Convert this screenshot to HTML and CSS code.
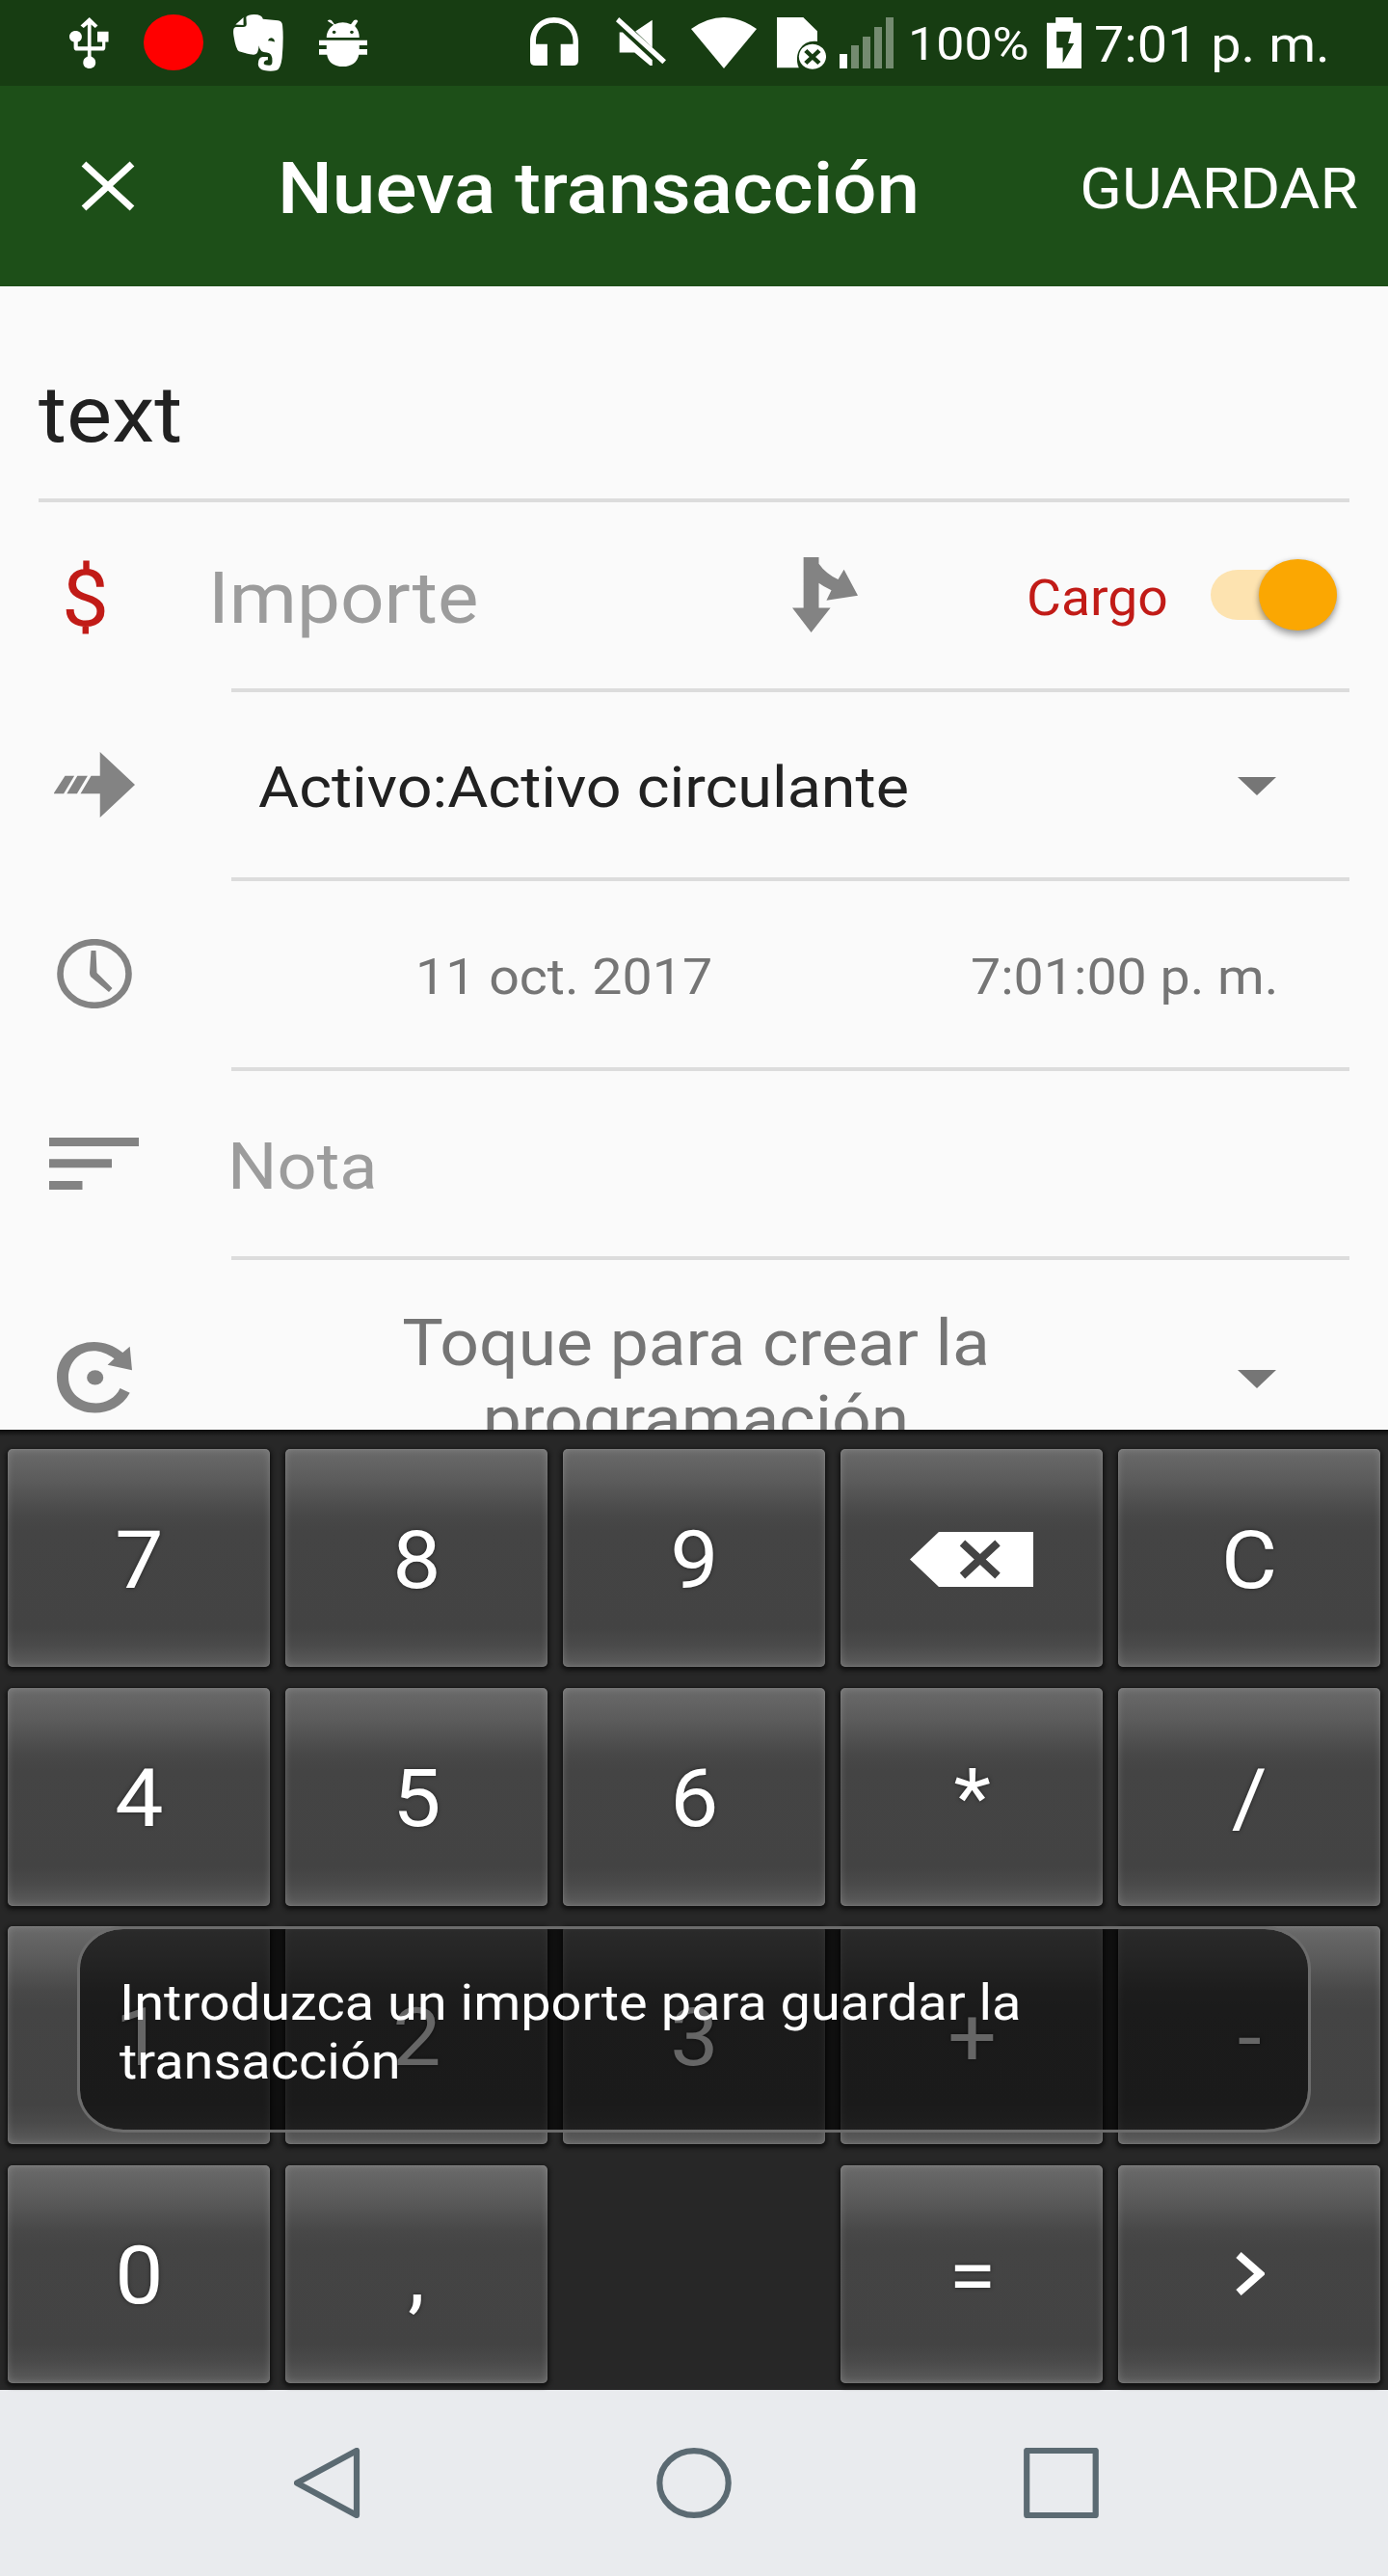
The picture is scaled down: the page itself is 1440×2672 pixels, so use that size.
FILE: index.html
```html
<!DOCTYPE html>
<html lang="es">
<head>
<meta charset="utf-8">
<title>Nueva transacción</title>
<link rel="stylesheet" href="styles.css">
</head>
<body>
<div class="screen">
  <header class="status">
    <svg class="ic usb" viewBox="157 55 89 158" preserveAspectRatio="none"><path d="M202 55L221 80L215 88L206 77V145H231V131H220V99H245V131H238V148Q238 158 231 158H206V176Q216 182 216 195C216 206 210 213 202 213C194 213 188 206 188 195Q188 182 198 176V158H174Q167 158 167 148V131Q157 126 157 115C157 105 163 97 171 97C179 97 185 105 185 115Q185 126 176 131V145H198V77L189 88L182 80Z"/></svg>
    <span class="record"></span>
    <svg class="ic evernote" viewBox="527 46 113 176" preserveAspectRatio="none"><path d="M532 77L550 55V79Z"/><path fill-rule="evenodd" d="M556 54Q560 46 574 46Q592 46 594 60L628 65Q637 66 638 80Q641 120 637 180Q634 215 624 219Q612 223 597 219Q584 215 583 200Q583 178 594 177H605V187Q595 188 596 199Q598 204 610 203Q615 203 615 190Q615 165 603 164Q586 163 585 142Q583 168 577 169Q572 174 540 160Q533 155 528 112Q525 86 533 85H549Q557 85 557 76ZM605 127Q608 116 615 119Q621 122 620 131Q612 127 605 127Z"/></svg>
    <svg class="ic droid" viewBox="721 60 109 147" preserveAspectRatio="none"><path fill-rule="evenodd" d="M738 117C738 100 744 86 754 77L740 65Q744 59 749 63L756 76Q775 63 793 76L800 63Q806 59 809 66L802 81Q812 96 812 117ZM755 95a4 5 0 1 0 .1 0ZM795 95a4 5 0 1 0 .1 0Z"/><path d="M721 125H830V141H812V153H830V170H811C808 194 794 207 775 207S741 194 739 170H721V153H738V141H721Z"/></svg>
    <svg class="ic phones" viewBox="1198 55 109 149" preserveAspectRatio="none"><path d="M1198 130C1198 88 1220 55 1252 55S1307 88 1307 130V188Q1307 204 1295 204H1267V138H1295V128C1295 95 1277 72 1252 72S1211 95 1211 128V138H1237V204H1210Q1198 204 1198 188Z"/></svg>
    <svg class="ic mute" viewBox="1392 55 113 149" preserveAspectRatio="none"><path d="M1399 55L1505 187L1497 199L1392 68ZM1474 63V148L1436 98ZM1400 101H1407L1474 187V204H1469L1434 164H1400Z"/></svg>
    <svg class="ic wifi" viewBox="0 0 68 53"><path d="M0 12Q34 -12 68 12L34 53Z"/></svg>
    <svg class="ic sim" viewBox="187 55 112 162" preserveAspectRatio="none"><path d="M187 55H247L279 98V130C250 122 223 160 237 212H187Z"/><path fill-rule="evenodd" d="M268 138a31 39 0 1 0 .1 0ZM256 154L268 170L280 154L287 163L275 178L287 193L280 202L268 187L256 202L249 193L261 178L249 163Z"/></svg>
    <span class="signal"><i class="b1"></i><i class="b2"></i><i class="b3"></i><i class="b4"></i><i class="b5"></i></span>
    <span class="pct t">100%</span>
    <svg class="ic batt" viewBox="797 55 78 157" preserveAspectRatio="none"><path fill-rule="evenodd" d="M797 72H817V55H856V72H875V212H797ZM819 99H852L845 135H858L833 195V148H819Z"/></svg>
    <span class="time t">7:01 p. m.</span>
  </header>

  <div class="appbar">
    <svg class="close" viewBox="0 0 56 52"><path d="M3 3L53 49M53 3L3 49"/></svg>
    <h1 class="title t">Nueva transacción</h1>
    <button class="save"><span class="t">GUARDAR</span></button>
  </div>

  <main class="form">
    <div class="desc"><span class="t">text</span></div>

    <div class="row">
      <div class="lead"><span class="currency t">$</span></div>
      <div class="body amount">
        <span class="importe hint t">Importe</span>
        <svg class="split" viewBox="223 234 146 233" preserveAspectRatio="none"><path d="M248 234H282V254Q297 284 325 303L338 272L369 353L299 368L310 336Q292 325 282 314V391H308L265 467L223 391H248Z"/></svg>
        <span class="cargo t">Cargo</span>
        <span class="toggle"><i class="knob"></i></span>
      </div>
    </div>

    <div class="row">
      <div class="lead"><svg class="transfer" viewBox="122 1253 183 178" preserveAspectRatio="none"><path d="M226 1253L305 1342L226 1431V1366H182L206 1318H226ZM147 1318H168L144 1366H121ZM175 1318H198L174 1366H151Z"/></svg></div>
      <div class="body account"><span class="t">Activo:Activo circulante</span><i class="caret"></i></div>
    </div>

    <div class="row">
      <div class="lead"><svg class="clock" viewBox="0 0 78 72"><ellipse cx="39" cy="36" rx="35.5" ry="32.8"/><path d="M35.5 12H40.5L41.5 35L57.5 51L54 55L35 39Q34 37 34 35Z"/></svg></div>
      <div class="body when"><span class="t">11 oct. 2017</span><span class="t">7:01:00 p. m.</span></div>
    </div>

    <div class="row">
      <div class="lead"><svg class="lines" viewBox="0 0 93 54"><path d="M0 0H93V9H0ZM0 22.300H65V31.300H0ZM0 45H34.500V54H0Z"/></svg></div>
      <div class="body note"><span class="hint t">Nota</span></div>
    </div>

    <div class="row repeat">
      <div class="lead"><svg class="recur" viewBox="129 1284 169 194" preserveAspectRatio="none"><path d="M293 1299L298 1362L243 1348L258 1331C205 1284 155 1324 155 1381C155 1458 246 1476 271 1411L293 1423C254 1510 129 1488 129 1381C129 1290 221 1258 277 1315Z"/><ellipse cx="215" cy="1382" rx="18.500" ry="20"/></svg></div>
      <div class="body"><div class="schedule"><span class="tc">Toque para crear la</span><span class="tc">programación</span></div><i class="caret"></i></div>
    </div>
  </main>

  <section class="pad">
    <div class="key"><span>7</span></div><div class="key"><span>8</span></div><div class="key"><span>9</span></div>
    <div class="key"><svg class="bksp" viewBox="0 0 128 57"><path fill-rule="evenodd" d="M0 28.500L30 0H128V57H30ZM52.500 14L67.500 28.500L52.500 43L57 47.500L73 33.500L88.500 47.500L93 43L78 28.500L93 14L88.500 9.500L73 23.500L57 9.500Z"/><path class="cross" d="M54.500 11.500L91 45.500M91 11.500L54.500 45.500"/></svg></div>
    <div class="key"><span>C</span></div>
    <div class="key"><span>4</span></div><div class="key"><span>5</span></div><div class="key"><span>6</span></div><div class="key"><span>*</span></div><div class="key"><span>/</span></div>
    <div class="key"><span>1</span></div><div class="key"><span>2</span></div><div class="key"><span>3</span></div><div class="key"><span>+</span></div><div class="key"><span>-</span></div>
    <div class="key"><span>0</span></div><div class="key"><span>,</span></div><div></div><div class="key"><span>=</span></div>
    <div class="key"><svg class="next" viewBox="0 0 30 45"><path d="M3 3L25 22.500L3 42"/></svg></div>
    <div class="toast"><span class="t">Introduzca un importe para guardar la</span><span class="t">transacción</span></div>
  </section>

  <nav class="nav">
    <svg viewBox="0 0 78 73"><path d="M3 36.500L65 3V70Z"/></svg>
    <svg viewBox="0 0 78 73"><ellipse cx="39" cy="36.500" rx="35.700" ry="33.400"/></svg>
    <svg viewBox="0 0 78 73"><path d="M3.200 3H74.700V70H3.200Z"/></svg>
  </nav>
</div>
</body>
</html>
```
FILE: styles.css
```css
* { box-sizing: border-box; }
body { margin: 0; }
.screen {
  width: 1440px;
  height: 2672px;
  overflow: hidden;
  font-family: Roboto, "Noto Sans", sans-serif;
  background: #fafafa;
  --wide: 1.077;
}
svg { display: block; flex: none; }

/* widened type */
.t, .tc { display: block; flex: none; white-space: nowrap; }
.t { transform: scaleX(var(--wide)); transform-origin: 0 50%; width: max-content; }
.tc { transform: scaleX(var(--wide)); text-align: center; }

/* status bar */
.status { height: 89px; background: #173d12; display: flex; align-items: flex-start; color: #fff; }
.ic { fill: #fff; margin-top: 18px; }
.usb { width: 41px; height: 53px; margin-left: 72px; }
.record { width: 62px; height: 58px; border-radius: 50%; background: #f00; margin: 15px 0 0 36px; }
.evernote { width: 52px; height: 59px; margin: 15px 0 0 31px; }
.droid { width: 50px; height: 49px; margin: 20px 0 0 37px; }
.phones { width: 50px; height: 50px; margin-left: 169px; }
.mute { width: 52px; height: 50px; margin-left: 39px; }
.wifi { width: 68px; height: 53px; margin-left: 26px; }
.sim { width: 51px; height: 54px; margin-left: 21px; }
.signal { display: flex; align-items: flex-end; gap: 4px; height: 53px; margin: 18px 0 0 14px; }
.signal i { width: 8px; background: #748b70; }
.signal .b1 { height: 15px; background: #fff; }
.signal .b2 { height: 24px; }
.signal .b3 { height: 33px; }
.signal .b4 { height: 43px; }
.signal .b5 { height: 53px; }
.pct { --wide: 1.06; width: 143px; font-size: 49px; line-height: 60px; margin: 16px 0 0 15px; }
.batt { width: 36px; height: 53px; margin-left: 1px; }
.time { --wide: 1.072; font-size: 52px; line-height: 60px; margin: 17px 0 0 13px; }

/* app bar */
.appbar { height: 208px; background: #1d4f18; display: flex; align-items: flex-start; color: #fff; }
.close { width: 56px; height: 52px; margin: 78px 0 0 84px; fill: none; stroke: #fff; stroke-width: 7; }
.title { --wide: 1.083; margin: 57px 0 0 148px; font-size: 74px; line-height: 100px; font-weight: 500; }
.save { margin: 57px 31px 0 auto; padding: 0; border: 0; background: none; color: #fff; font: 400 59.5px/100px Roboto, sans-serif; }
.save .t { transform-origin: 100% 50%; }

/* form */
.form { height: 1186px; overflow: hidden; color: #212121; }
.desc { --wide: 1.09; height: 224px; margin: 0 40px; padding-top: 83px; border-bottom: 4px solid #dcdcdc; font-size: 81.5px; line-height: 100px; }
.row { height: 196.5px; display: flex; }
.lead { width: 240px; flex: none; display: flex; align-items: center; padding-bottom: 4px; }
.lead svg { fill: #838383; }
.body { flex: 1; margin-right: 40px; border-bottom: 4px solid #dcdcdc; display: flex; align-items: center; }
.hint { color: #9c9c9c; }
.currency { margin: 9px 0 0 64px; font-size: 81px; line-height: 90px; color: #c11b17; }
.amount { display: grid; grid-template-columns: 582px 243px 191px 1fr; }
.importe { --wide: 1.082; margin: 8px 0 0 -24px; font-size: 74px; line-height: 90px; }
.split { width: 68px; height: 78px; fill: #838383; }
.cargo { --wide: 1.083; margin-top: 7px; font-size: 51px; line-height: 60px; color: #c11b17; }
.toggle { width: 131px; height: 52px; border-radius: 28px / 26px; background: #fde3b0; display: flex; align-items: center; justify-content: flex-end; }
.knob { flex: none; width: 81px; height: 74px; border-radius: 50%; background: #fba702; box-shadow: 0 5px 7px rgba(0,0,0,.32), 0 0 5px rgba(0,0,0,.15); }
.transfer { width: 84px; height: 68px; margin-left: 56px; }
.account { padding-left: 28px; font-size: 60px; line-height: 80px; }
.account .t { margin-top: 7px; }
.caret { margin: 3px 76px 0 auto; flex: none; border: 20px solid transparent; border-top: 19px solid #767676; border-bottom: 0; }
.clock { width: 78px; height: 72px; margin-left: 59px; }
.clock ellipse { fill: none; stroke: #838383; stroke-width: 6.600; }
.when { --wide: 1.067; display: grid; grid-template-columns: 576px 1fr; padding-left: 191px; font-size: 52px; line-height: 60px; color: #757575; }
.when .t { margin-top: 8px; }
.lines { width: 93px; height: 54px; margin-left: 51px; }
.note { font-size: 67px; line-height: 80px; }
.note .t { margin: 7px 0 0 -4px; }
.repeat { height: 246px; }
.recur { width: 78px; height: 75px; margin-left: 59px; }
.schedule { --wide: 1.066; width: 964px; align-self: flex-start; padding-top: 47px; font-size: 67px; line-height: 79px; color: #757575; }
.repeat .body, .repeat .lead { border: 0; padding-bottom: 3px; }
.repeat .body .caret { margin-top: 3px; }

/* calculator pad */
.pad {
  position: relative;
  height: 996px;
  padding: 20px 8px 7px;
  display: grid;
  grid-template-columns: repeat(5, 272px);
  grid-template-rows: repeat(4, 226px);
  column-gap: 16px;
  row-gap: 21.6px;
  background: linear-gradient(#0c0c0c, #272727 7px);
}
.key {
  display: flex;
  align-items: center;
  justify-content: center;
  border-radius: 5px;
  color: #fff;
  font-size: 83px;
  line-height: 100px;
  background: linear-gradient(#6a6a6a, #5b5b5b 15%, #484848 30%, #444 38%, #434343 82%, #4a4a4a 90%, #5c5c5c);
  box-shadow: 0 2px 4px 2px #111, inset 0 0 9px rgba(255,255,255,.18), inset 0 0 2px rgba(255,255,255,.18);
}
.key span { transform: scaleX(var(--wide)); margin: 5px 0 0 1px; text-shadow: 0 0 4px rgba(0,0,0,.5); }
.bksp { width: 128px; height: 57px; margin-top: 2px; fill: #fff; }
.cross { fill: none; stroke: #444; stroke-width: 8; }
.next { width: 30px; height: 45px; margin-left: 2px; fill: none; stroke: #fff; stroke-width: 8; }
.toast {
  position: absolute;
  left: 80px;
  top: 515px;
  width: 1280px;
  height: 214px;
  padding: 46px 0 0 40.5px;
  border: 3px solid #6c6c6c;
  border-radius: 48px / 44px;
  background: rgba(0,0,0,.6);
  background-clip: padding-box;
  color: #fff;
  font-size: 51.500px;
  line-height: 61.300px;
  --wide: 1.086;
}

/* navigation bar */
.nav { height: 193px; background: #e9ebee; display: flex; align-items: flex-start; padding: 60px 0 0 305px; }
.nav svg { width: 78px; height: 73px; margin-right: 298px; fill: none; stroke: #5b6a72; stroke-width: 6.200; stroke-linejoin: round; }
.nav svg:nth-child(2) { margin-right: 303px; }
```
